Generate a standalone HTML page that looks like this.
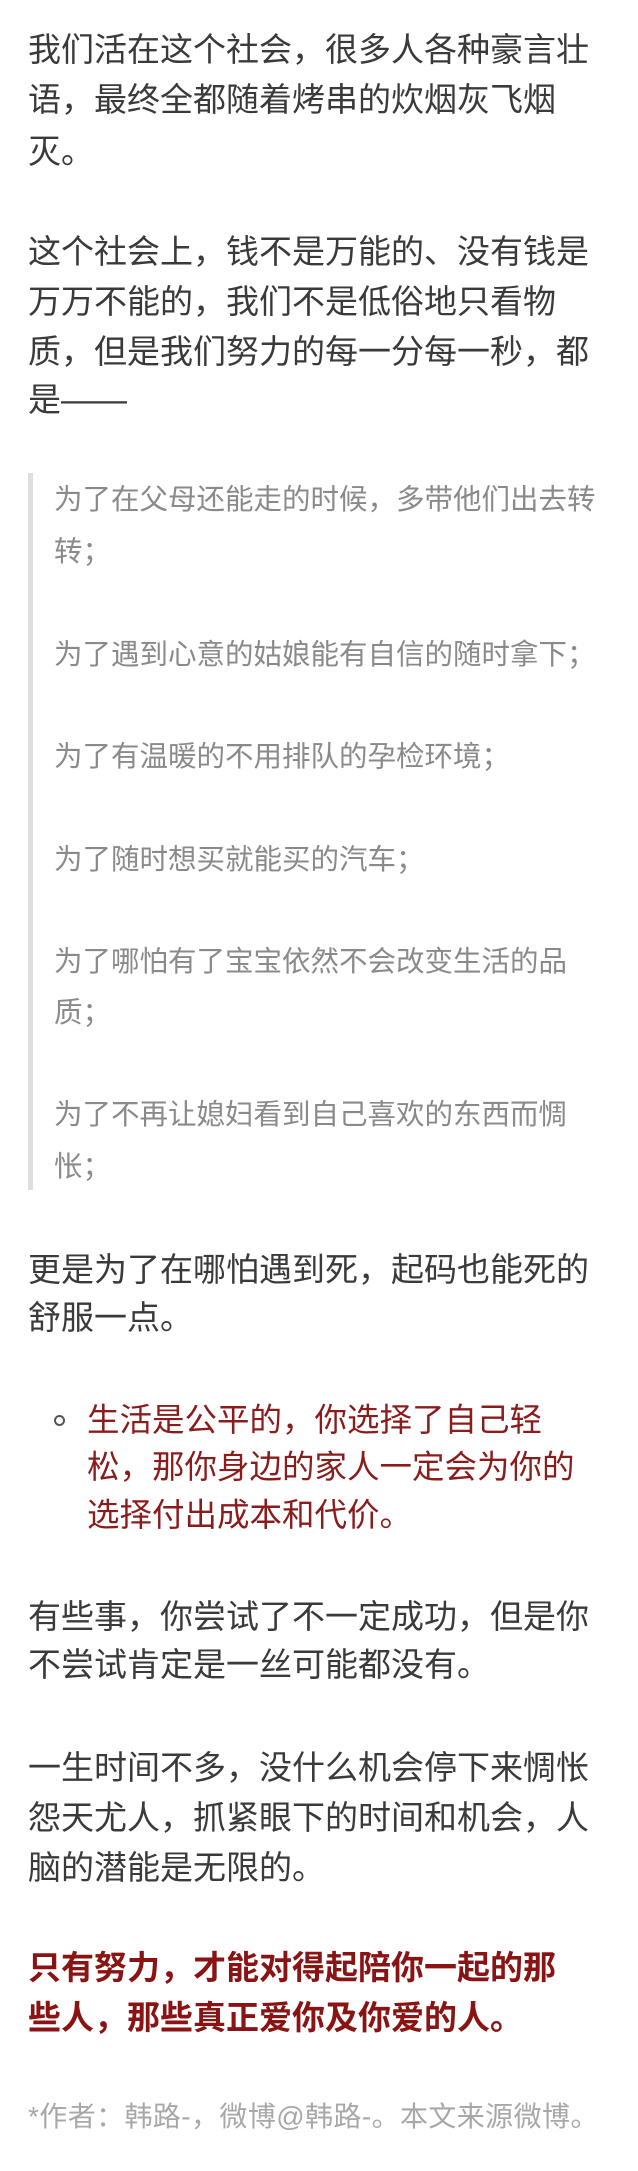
<!DOCTYPE html>
<html><head><meta charset="utf-8">
<style>
html,body{margin:0;padding:0;background:#fff;}
body{width:638px;height:2171px;position:relative;overflow:hidden;font-family:"Liberation Sans","Noto Sans CJK SC",sans-serif;}
.l{position:absolute;left:28px;white-space:nowrap;height:50px;line-height:50px;font-size:33px;color:#3a3a3a;}
.q{left:54px;font-size:28.5px;color:#8a8a8a;}
.r{left:87px;font-size:32.5px;color:#8b1c1c;}
.b{font-weight:bold;color:#8a1414;}
.f{font-size:28px;letter-spacing:0.4px;color:#a8a8a8;}
.bar{position:absolute;left:28px;top:473px;width:5px;height:717px;background:#dedede;}
.dot{position:absolute;left:54px;top:1415px;width:7px;height:7px;border:2px solid #555;border-radius:50%;}
</style></head><body>
<div class="l" style="top:25px">我们活在这个社会，很多人各种豪言壮</div>
<div class="l" style="top:75px">语，最终全都随着烤串的炊烟灰飞烟</div>
<div class="l" style="top:127px">灭。</div>

<div class="l" style="top:227px">这个社会上，钱不是万能的、没有钱是</div>
<div class="l" style="top:277px">万万不能的，我们不是低俗地只看物</div>
<div class="l" style="top:327px">质，但是我们努力的每一分每一秒，都</div>
<div class="l" style="top:375px">是——</div>

<div class="bar"></div>
<div class="l q" style="top:475px">为了在父母还能走的时候，多带他们出去转</div>
<div class="l q" style="top:527px">转；</div>
<div class="l q" style="top:630px">为了遇到心意的姑娘能有自信的随时拿下；</div>
<div class="l q" style="top:732px">为了有温暖的不用排队的孕检环境；</div>
<div class="l q" style="top:835px">为了随时想买就能买的汽车；</div>
<div class="l q" style="top:937px">为了哪怕有了宝宝依然不会改变生活的品</div>
<div class="l q" style="top:988px">质；</div>
<div class="l q" style="top:1090px">为了不再让媳妇看到自己喜欢的东西而惆</div>
<div class="l q" style="top:1142px">怅；</div>

<div class="l" style="top:1245px">更是为了在哪怕遇到死，起码也能死的</div>
<div class="l" style="top:1293px">舒服一点。</div>

<div class="dot"></div>
<div class="l r" style="top:1395px">生活是公平的，你选择了自己轻</div>
<div class="l r" style="top:1442px">松，那你身边的家人一定会为你的</div>
<div class="l r" style="top:1490px">选择付出成本和代价。</div>

<div class="l" style="top:1592px">有些事，你尝试了不一定成功，但是你</div>
<div class="l" style="top:1640px">不尝试肯定是一丝可能都没有。</div>

<div class="l" style="top:1743px">一生时间不多，没什么机会停下来惆怅</div>
<div class="l" style="top:1793px">怨天尤人，抓紧眼下的时间和机会，人</div>
<div class="l" style="top:1843px">脑的潜能是无限的。</div>

<div class="l b" style="top:1943px">只有努力，才能对得起陪你一起的那</div>
<div class="l b" style="top:1993px">些人，那些真正爱你及你爱的人。</div>

<div class="l f" style="top:2092px">*作者：韩路-，微博@韩路-。本文来源微博。</div>
</body></html>
